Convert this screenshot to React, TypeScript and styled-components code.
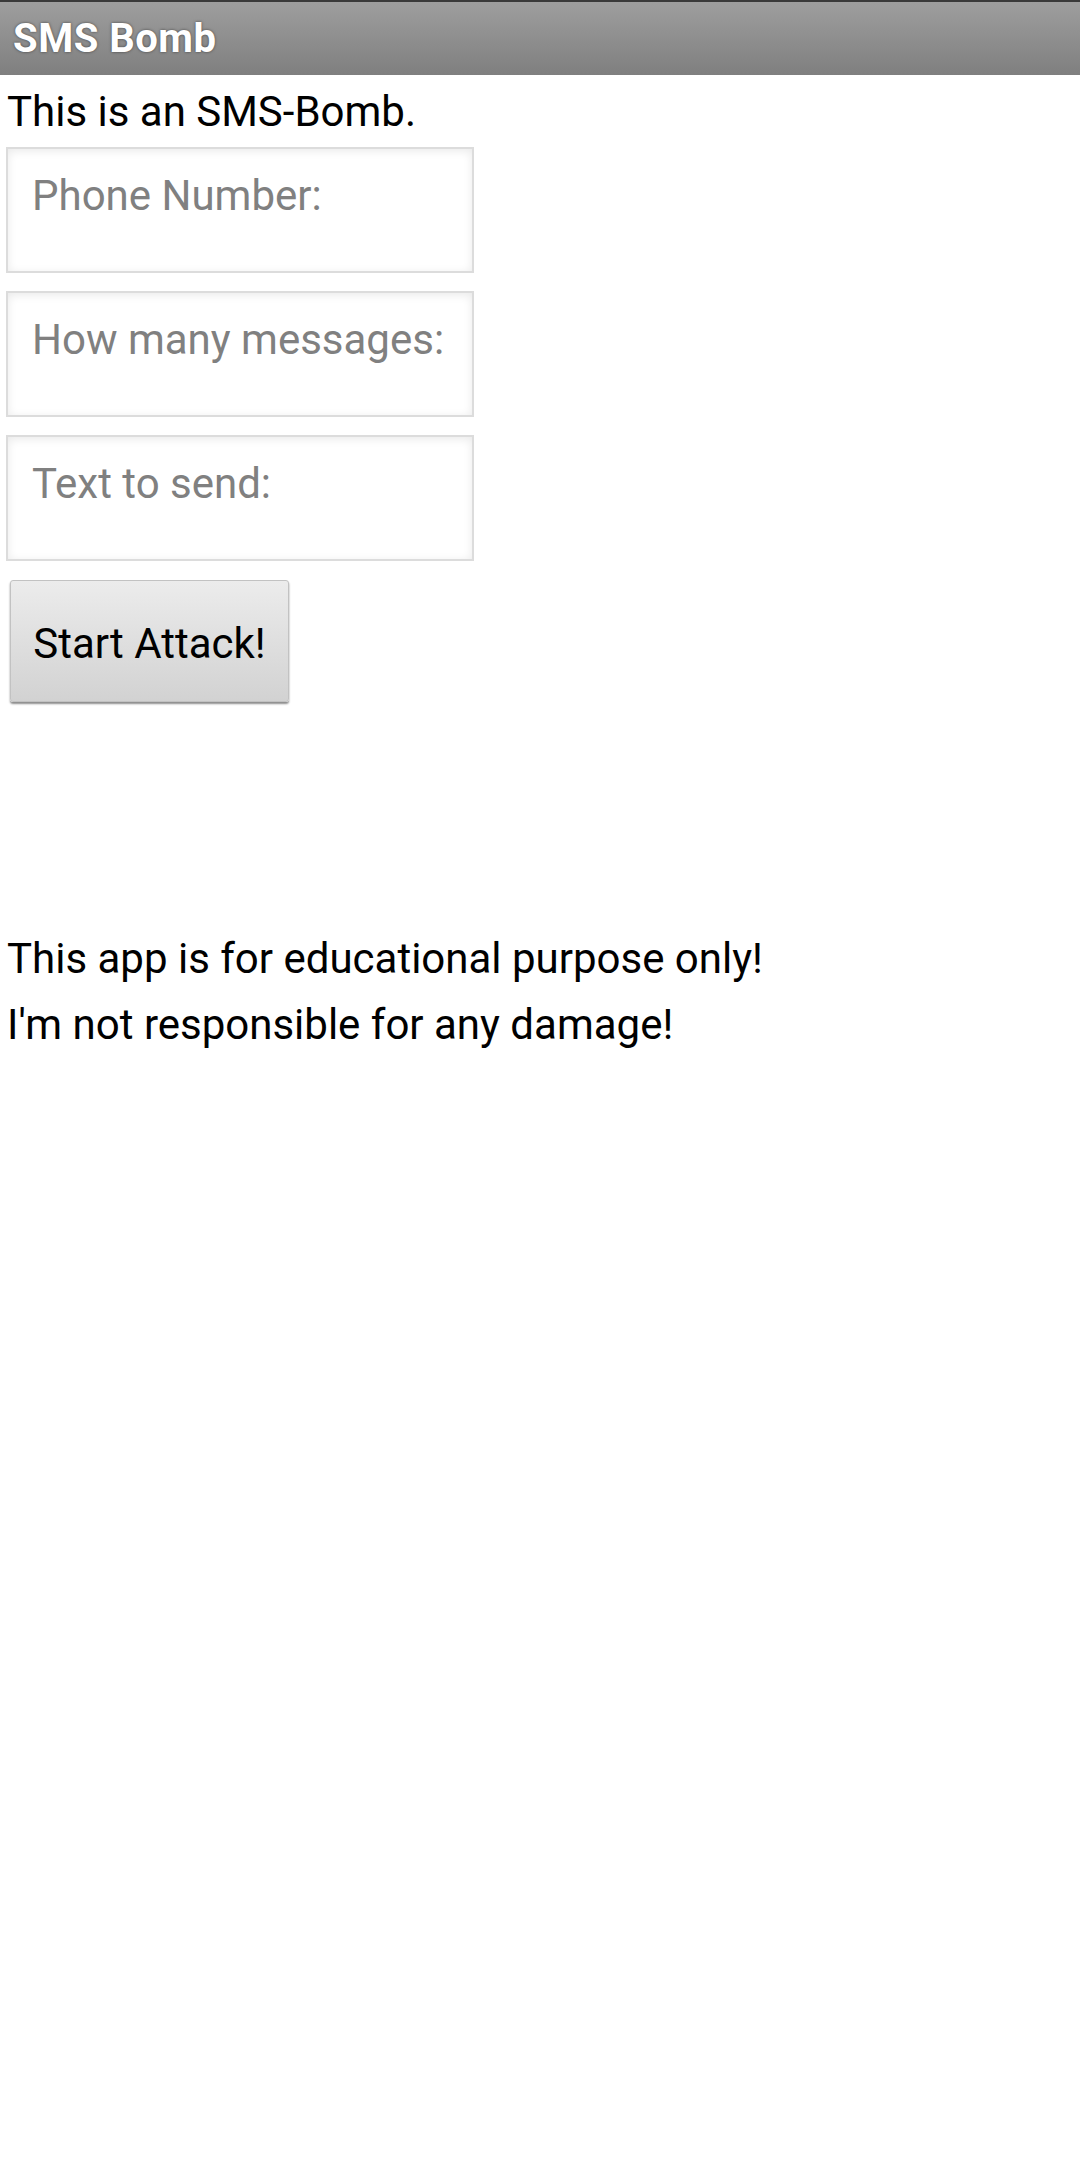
import React from "react";
import styled, { createGlobalStyle } from "styled-components";

const GlobalStyle = createGlobalStyle`
    html, body {
        margin: 0;
        padding: 0;
        background: #FFF;
    }
    body {
        font-family: Roboto, "Noto Sans", Arial, sans-serif;
    }
`;

const Pagina = styled.div`
    width: 1080px;
    min-height: 2168px;
    background: #FFF;
`;

const BarraTitulo = styled.header`
    height: 75px;
    box-sizing: border-box;
    border-top: 2px solid #3a3a3a;
    background: linear-gradient(to bottom, #9e9e9e, #7f7f7f);
    display: flex;
    align-items: center;
    padding-left: 13px;
`;

const Titulo = styled.h1`
    margin: 0;
    font-size: 40px;
    font-weight: 700;
    letter-spacing: 0.5px;
    color: #FFF;
    text-shadow: 0 0 3px rgba(0, 0, 0, 0.55);
`;

const Conteudo = styled.main`
    display: flex;
    flex-direction: column;
    align-items: flex-start;
    padding: 13px 0 0 6px;
`;

const Texto = styled.p`
    margin: 0 0 0 1px;
    font-size: 42px;
    line-height: 48px;
    color: #000;
`;

const ListaCampos = styled.div`
    display: flex;
    flex-direction: column;
    gap: 18px;
    margin-top: 11px;
`;

const Campo = styled.textarea`
    width: 468px;
    height: 126px;
    box-sizing: border-box;
    border: 2px solid #dcdcdc;
    box-shadow: inset 0 2px 10px rgba(0, 0, 0, 0.09);
    background: #FFF;
    padding: 22px 20px 0 24px;
    font-family: Roboto, "Noto Sans", Arial, sans-serif;
    font-size: 42px;
    line-height: 50px;
    color: #000;
    resize: none;
    outline: none;
    overflow: hidden;

    &::placeholder {
        color: #808080;
    }
`;

const BotaoAtaque = styled.button`
    margin: 19px 0 0 4px;
    width: 279px;
    height: 122px;
    box-sizing: border-box;
    border: 1px solid #c2c2c2;
    border-radius: 3px;
    background: linear-gradient(to bottom, #ececec, #d2d2d2);
    box-shadow: 0 2px 2px rgba(0, 0, 0, 0.45);
    font-family: Roboto, "Noto Sans", Arial, sans-serif;
    font-size: 42px;
    color: #000;
    padding: 4px 0 0;
    cursor: pointer;
`;

const Aviso = styled.div`
    display: flex;
    flex-direction: column;
    margin-top: 224px;
`;

const LinhaAviso = styled.p`
    margin: 0 0 0 1px;
    font-size: 42px;
    line-height: 66px;
    color: #000;
`;

const campos = ["Phone Number:", "How many messages:", "Text to send:"];

export default function App() {
    return (
        <Pagina>
            <GlobalStyle />
            <BarraTitulo>
                <Titulo>SMS Bomb</Titulo>
            </BarraTitulo>
            <Conteudo>
                <Texto>This is an SMS-Bomb.</Texto>
                <ListaCampos>
                    {campos.map((placeholder) => (
                        <Campo key={placeholder} placeholder={placeholder} />
                    ))}
                </ListaCampos>
                <BotaoAtaque type="button">Start Attack!</BotaoAtaque>
                <Aviso>
                    <LinhaAviso>This app is for educational purpose only!</LinhaAviso>
                    <LinhaAviso>I'm not responsible for any damage!</LinhaAviso>
                </Aviso>
            </Conteudo>
        </Pagina>
    );
}
